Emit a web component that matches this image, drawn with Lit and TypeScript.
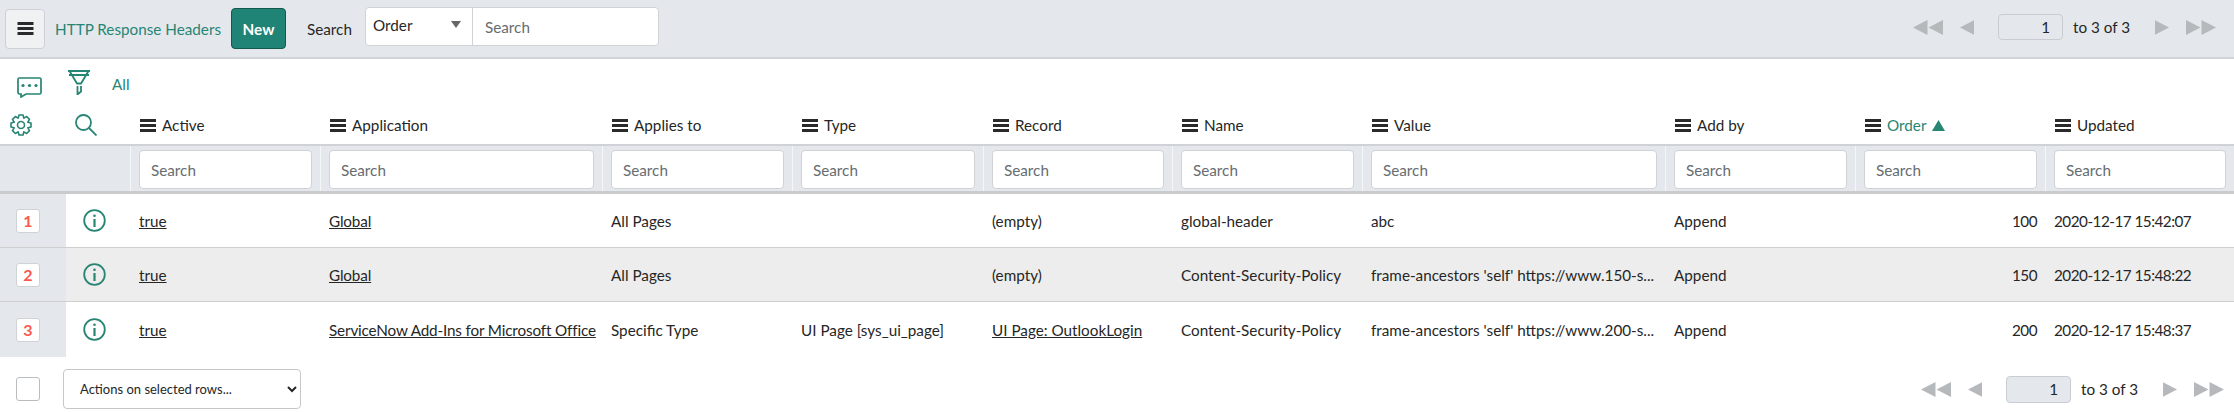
import { LitElement, css, html, svg } from "lit";
import { customElement } from "lit/decorators.js";

type Row = {
  active: string;
  app: string;
  applies: string;
  type: string;
  record: string;
  recordLink?: boolean;
  name: string;
  value: string;
  addBy: string;
  order: number;
  updated: string;
};

const COLUMNS = [
  "Active",
  "Application",
  "Applies to",
  "Type",
  "Record",
  "Name",
  "Value",
  "Add by",
  "Order",
  "Updated",
];

const ROWS: Row[] = [
  {
    active: "true",
    app: "Global",
    applies: "All Pages",
    type: "",
    record: "(empty)",
    name: "global-header",
    value: "abc",
    addBy: "Append",
    order: 100,
    updated: "2020-12-17 15:42:07",
  },
  {
    active: "true",
    app: "Global",
    applies: "All Pages",
    type: "",
    record: "(empty)",
    name: "Content-Security-Policy",
    value: "frame-ancestors 'self' https://www.150-s...",
    addBy: "Append",
    order: 150,
    updated: "2020-12-17 15:48:22",
  },
  {
    active: "true",
    app: "ServiceNow Add-Ins for Microsoft Office",
    applies: "Specific Type",
    type: "UI Page [sys_ui_page]",
    record: "UI Page: OutlookLogin",
    recordLink: true,
    name: "Content-Security-Policy",
    value: "frame-ancestors 'self' https://www.200-s...",
    addBy: "Append",
    order: 200,
    updated: "2020-12-17 15:48:37",
  },
];

const TEAL = "#278574";

const bars = (w: number, h: number) => html`<svg class="bars" width=${w} height=${h} viewBox="0 0 16 13">
  <rect width="16" height="3" y="0" fill="#2a2a2a"></rect>
  <rect width="16" height="3" y="5" fill="#2a2a2a"></rect>
  <rect width="16" height="3" y="10" fill="#2a2a2a"></rect>
</svg>`;

const tri = (x: number, dir: number) =>
  dir < 0
    ? svg`<polygon points="${x + 14.5},0 ${x + 14.5},15 ${x},7.5" fill="#b6b9bc"></polygon>`
    : svg`<polygon points="${x},0 ${x},15 ${x + 14.5},7.5" fill="#b6b9bc"></polygon>`;

const pager = (cls: string) => html`<div class="pager ${cls}">
  <svg width="30" height="15" viewBox="0 0 30 15">${tri(0, -1)}${tri(15.5, -1)}</svg>
  <svg class="prev" width="14" height="15" viewBox="0 0 14.5 15">${tri(0, -1)}</svg>
  <input class="page" .value=${"1"} />
  <span class="count">to 3 of 3</span>
  <svg class="next" width="14" height="15" viewBox="0 0 14.5 15">${tri(0, 1)}</svg>
  <svg class="last" width="30" height="15" viewBox="0 0 30 15">${tri(0, 1)}${tri(15.5, 1)}</svg>
</div>`;

// eight tooth gear outline, centred on 11,11
function gearPath() {
  const pts: string[] = [];
  for (let i = 0; i < 8; i++) {
    const a = (i * Math.PI) / 4;
    const steps: [number, number][] = [
      [7.4, -0.39],
      [10.2, -0.2],
      [10.2, 0.2],
      [7.4, 0.39],
    ];
    for (const [r, d] of steps) {
      const x = 11 + r * Math.sin(a + d);
      const y = 11 - r * Math.cos(a + d);
      pts.push(`${x.toFixed(2)},${y.toFixed(2)}`);
    }
  }
  return pts.join(" ");
}

@customElement("app-root")
export class AppRoot extends LitElement {
  render() {
    return html`
      <header class="bar">
        <button class="menu">${bars(17, 13)}</button>
        <span class="title">HTTP Response Headers</span>
        <button class="new">New</button>
        <span class="search-label">Search</span>
        <div class="search-group">
          <div class="field-pick">
            <span>Order</span>
            <svg width="10" height="7" viewBox="0 0 10 7"><polygon points="0,0 10,0 5,7" fill="#666"></polygon></svg>
          </div>
          <input class="group-input" placeholder="Search" />
        </div>
        ${pager("top")}
      </header>

      <div class="filters">
        <svg class="comment" width="25" height="21" viewBox="0 0 25 21" fill="none" stroke=${TEAL} stroke-width="1.700">
          <path d="M2.500 1h20a1.500 1.500 0 0 1 1.500 1.500v13a1.500 1.500 0 0 1-1.500 1.500H9l-5 3v-3H2.500A1.500 1.500 0 0 1 1 15.500v-13A1.500 1.500 0 0 1 2.500 1z"></path>
          <circle cx="6" cy="8.500" r="1.600" fill=${TEAL} stroke="none"></circle>
          <circle cx="12.500" cy="8.500" r="1.600" fill=${TEAL} stroke="none"></circle>
          <circle cx="19" cy="8.500" r="1.600" fill=${TEAL} stroke="none"></circle>
        </svg>
        <svg class="funnel" width="22" height="25" viewBox="0 0 22 25" fill="none" stroke=${TEAL} stroke-width="1.800">
          <path d="M0 1h22M1 5h20M1.500 1l7.500 12.500h4L20.500 1M9.500 16v8.500l3.500-3V16"></path>
        </svg>
        <span class="all">All</span>
      </div>

      <div class="grid head">
        <div class="cell gear">
          <svg width="22" height="22" viewBox="0 0 22 22" fill="none" stroke=${TEAL} stroke-width="1.600" stroke-linejoin="round">
            <polygon points=${gearPath()}></polygon>
            <circle cx="11" cy="11" r="3.500"></circle>
          </svg>
        </div>
        <div class="cell">
          <svg width="22" height="22" viewBox="0 0 22 22" fill="none" stroke=${TEAL} stroke-width="1.800">
            <circle cx="8.500" cy="8.500" r="7.500"></circle>
            <path d="M14 14l7.500 7.500"></path>
          </svg>
        </div>
        ${COLUMNS.map(
          (c) => html`<div class="cell col ${c === "Order" ? "sorted" : ""}">
            ${bars(16, 13)}<span>${c}</span>
            ${c === "Order"
              ? html`<svg width="13" height="11" viewBox="0 0 13 11"><polygon points="6.500,0 13,11 0,11" fill=${TEAL}></polygon></svg>`
              : ""}
          </div>`
        )}
      </div>

      <div class="grid filter-row">
        <div class="gutter"></div>
        ${COLUMNS.map(
          () => html`<div class="fcell"><input class="col-input" placeholder="Search" /></div>`
        )}
      </div>

      ${ROWS.map(
        (r, i) => html`<div class="grid row ${i === 1 ? "odd" : ""} ${i === 2 ? "last-row" : ""}">
          <div class="idx"><span class="badge">${i + 1}</span></div>
          <div class="cell info">
            <svg width="23" height="23" viewBox="0 0 23 23" fill="none" stroke=${TEAL} stroke-width="1.800">
              <circle cx="11.500" cy="11.500" r="10.300"></circle>
              <circle cx="11.500" cy="6.700" r="1.300" fill=${TEAL} stroke="none"></circle>
              <path d="M11.500 10v8" stroke-width="2.200"></path>
            </svg>
          </div>
          <div class="cell"><a>${r.active}</a></div>
          <div class="cell app"><a>${r.app}</a></div>
          <div class="cell">${r.applies}</div>
          <div class="cell">${r.type}</div>
          <div class="cell">${r.recordLink ? html`<a>${r.record}</a>` : r.record}</div>
          <div class="cell">${r.name}</div>
          <div class="cell">${r.value}</div>
          <div class="cell">${r.addBy}</div>
          <div class="cell num">${r.order}</div>
          <div class="cell date">${r.updated}</div>
        </div>`
      )}

      <footer class="foot">
        <span class="check"></span>
        <select class="actions"><option>Actions on selected rows...</option></select>
        ${pager("bottom")}
      </footer>
    `;
  }

  static styles = css`
    :host {
      display: block;
      width: 2234px;
      height: 412px;
      overflow: hidden;
      background: #fff;
      font-family: Lato, "Liberation Sans", sans-serif;
      font-size: 15.25px;
      color: #262626;
    }
    input,
    select,
    button {
      font-family: inherit;
      font-size: inherit;
      box-sizing: border-box;
    }
    .bar {
      height: 59px;
      box-sizing: border-box;
      border-bottom: 2px solid #d0d4d8;
      background: #e4e8ec;
      display: flex;
      align-items: center;
      padding: 0 0 0 5px;
    }
    .menu {
      width: 40px;
      height: 40px;
      display: flex;
      align-items: center;
      justify-content: center;
      padding: 0;
      background: #eff1f3;
      border: 1px solid #cdd1d5;
      border-radius: 4px;
    }
    .title {
      margin-left: 10px;
      width: 165px;
      flex: none;
      white-space: nowrap;
      color: #278574;
    }
    .new {
      margin-left: 11px;
      width: 55px;
      height: 41px;
      padding: 0;
      color: #fff;
      font-weight: 700;
      background: #1f8476;
      border: 1px solid #14584e;
      border-radius: 4px;
    }
    .search-label {
      margin-left: 21px;
      width: 44px;
      flex: none;
    }
    .search-group {
      margin-left: 14px;
      display: flex;
      height: 39px;
      width: 294px;
      box-sizing: border-box;
      border: 1px solid #cfd3d6;
      border-radius: 4px;
      background: #fff;
      margin-top: -4px;
    }
    .field-pick {
      width: 107px;
      flex: none;
      box-sizing: border-box;
      display: flex;
      align-items: center;
      justify-content: space-between;
      padding: 0 11px 4px 7px;
      border-right: 1px solid #cfd3d6;
    }
    .group-input {
      flex: 1;
      min-width: 0;
      border: 0;
      background: none;
      padding: 0 12px;
      outline: none;
    }
    input::placeholder {
      color: #666c70;
      opacity: 1;
    }
    .pager {
      display: flex;
      align-items: center;
      margin-left: auto;
      flex: none;
    }
    .pager.top {
      margin-right: 18px;
      margin-top: -3px;
    }
    .pager.bottom {
      margin-right: 10px;
    }
    .prev {
      margin-left: 17px;
    }
    .page {
      margin-left: 24px;
      width: 65px;
      height: 26px;
      text-align: right;
      padding: 0 12px 0 0;
      border: 1px solid #c9cdd1;
      border-radius: 4px;
      background: #e4e8ec;
      color: #262626;
    }
    .bottom .page {
      height: 27px;
    }
    .count {
      margin-left: 10px;
      width: 57px;
      white-space: nowrap;
    }
    .next {
      margin-left: 25px;
    }
    .last {
      margin-left: 17px;
    }
    .filters {
      height: 47px;
      box-sizing: border-box;
      display: flex;
      align-items: flex-start;
      padding: 11px 0 0 17px;
    }
    .comment {
      margin-top: 7px;
    }
    .funnel {
      margin-left: 26px;
    }
    .all {
      margin-left: 22px;
      margin-top: 5px;
      color: #278574;
    }
    .grid {
      display: grid;
      grid-template-columns: 66px 64px 190px 282px 190px 191px 189px 190px 303px 190px 190px 189px;
    }
    .head {
      height: 38px;
    }
    .cell {
      display: flex;
      align-items: center;
      padding: 0 9px;
      white-space: nowrap;
      min-width: 0;
    }
    .gear {
      padding-left: 10px;
      padding-right: 0;
    }
    .col {
      gap: 6px;
      padding-left: 10px;
    }
    .sorted {
      color: #278574;
    }
    .bars {
      flex: none;
      display: block;
    }
    .filter-row {
      height: 50px;
      box-sizing: border-box;
      background: #e4e8ec;
      border-top: 2px solid #cfd3d7;
      border-bottom: 3px solid #c9cbcd;
    }
    .gutter {
      grid-column: span 2;
    }
    .fcell {
      border-left: 1px solid #f4f6f7;
      padding: 4px 8px 0 8px;
    }
    .col-input {
      display: block;
      width: 100%;
      height: 39px;
      border: 1px solid #cfd3d6;
      border-radius: 4px;
      background: #fff;
      padding: 0 11px;
    }
    .row {
      height: 54px;
      box-sizing: border-box;
      border-bottom: 1px solid #cfcfcf;
    }
    .row.odd {
      background: #ededed;
    }
    .row.last-row {
      height: 55px;
      border-bottom: 0;
    }
    .idx {
      background: #e4e8ec;
      display: flex;
      align-items: center;
      padding-left: 16px;
    }
    .badge {
      width: 24px;
      height: 24px;
      box-sizing: border-box;
      border: 1px solid #cfd3d6;
      border-radius: 3px;
      background: #fff;
      display: flex;
      align-items: center;
      justify-content: center;
      color: #f95a50;
      font-weight: 700;
      font-size: 16px;
    }
    .info {
      padding-left: 17px;
    }
    .app {
      letter-spacing: -0.15px;
    }
    a {
      text-decoration: underline;
      color: inherit;
    }
    .num {
      justify-content: flex-end;
      padding-right: 8px;
      letter-spacing: -0.5px;
    }
    .date {
      letter-spacing: -0.5px;
    }
    .foot {
      height: 55px;
      box-sizing: border-box;
      display: flex;
      align-items: center;
      padding: 12px 0 3px 16px;
    }
    .check {
      width: 24px;
      height: 24px;
      box-sizing: border-box;
      border: 1px solid #b9bdc0;
      border-radius: 3px;
      background: #fff;
    }
    .actions {
      margin-left: 23px;
      width: 238px;
      height: 40px;
      padding: 0 4px 0 12px;
      font-size: 13px;
      color: #262626;
      border: 1px solid #c4c8cb;
      border-radius: 4px;
      background: #fff;
    }
  `;
}
